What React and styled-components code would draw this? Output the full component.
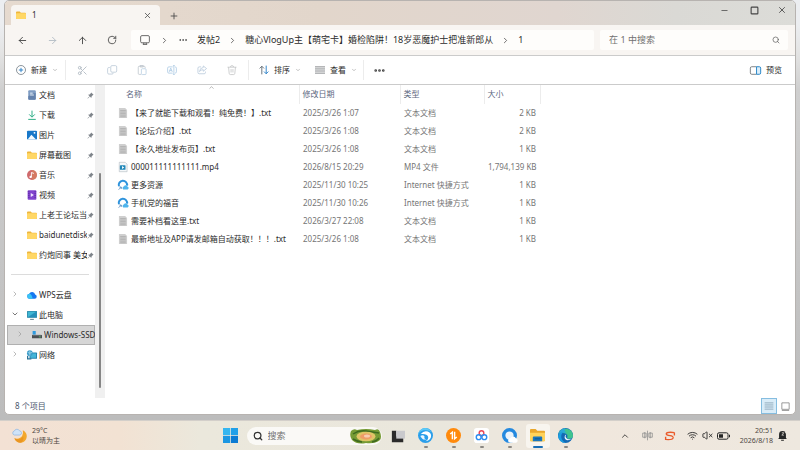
import React from 'react'
import styled, { createGlobalStyle } from 'styled-components'
import {
    ArrowLeft, ArrowRight, ArrowUp, RotateCw, ChevronRight, ChevronDown, ChevronUp,
    X, Plus, Minus, Square, Search, Wifi, VolumeX, Scissors, Ellipsis,
} from 'lucide-react'

const textColor = '#2b2b2b'
const mutedColor = '#757575'
const lineColor = '#cbcbcb'

const places = [
    { name: '文档', icon: 'doc' },
    { name: '下载', icon: 'download' },
    { name: '图片', icon: 'image' },
    { name: '屏幕截图', icon: 'folder' },
    { name: '音乐', icon: 'music' },
    { name: '视频', icon: 'video' },
    { name: '上老王论坛当', icon: 'folder' },
    { name: 'baidunetdisk', icon: 'folder' },
    { name: '约炮同事 美女', icon: 'folder' },
]

const drives = [
    { name: 'WPS云盘', icon: 'cloud' },
    { name: '此电脑', icon: 'pc', open: true },
    { name: 'Windows-SSD', icon: 'disk', nested: true, selected: true },
    { name: '网络', icon: 'network' },
]

const files = [
    { name: '【来了就能下载和观看！纯免费！】.txt', icon: 'txt', date: '2025/3/26 1:07', type: '文本文档', size: '2 KB' },
    { name: '【论坛介绍】.txt', icon: 'txt', date: '2025/3/26 1:08', type: '文本文档', size: '2 KB' },
    { name: '【永久地址发布页】.txt', icon: 'txt', date: '2025/3/26 1:08', type: '文本文档', size: '1 KB' },
    { name: '000011111111111.mp4', icon: 'mp4', date: '2026/8/15 20:29', type: 'MP4 文件', size: '1,794,139 KB' },
    { name: '更多资源', icon: 'url', date: '2025/11/30 10:25', type: 'Internet 快捷方式', size: '1 KB' },
    { name: '手机党的福音', icon: 'url', date: '2025/11/30 10:26', type: 'Internet 快捷方式', size: '1 KB' },
    { name: '需要补档看这里.txt', icon: 'txt', date: '2026/3/27 22:08', type: '文本文档', size: '1 KB' },
    { name: '最新地址及APP请发邮箱自动获取！！！.txt', icon: 'txt', date: '2025/3/26 1:08', type: '文本文档', size: '1 KB' },
]

const drawings = {
    folder: (
        <>
            <path d="M0 4q0-1.500 1.500-1.500h4.500l1.800 1.800h6.700q1.500 0 1.500 1.500v7q0 1.500-1.500 1.500h-13q-1.500 0-1.500-1.500z" fill="#eeb53c" />
            <path d="M0 6.200q0-1 1-1h14q1 0 1 1v6.600q0 1.500-1.500 1.500h-13q-1.500 0-1.500-1.500z" fill="#ffd766" />
        </>
    ),
    doc: (
        <>
            <rect x="2" y="0.500" width="12" height="15" rx="1.500" fill="#7f9cc3" />
            <path d="M2 10l12-6v10q0 1.500-1.500 1.500h-9q-1.500 0-1.500-1.500z" fill="#6482ad" />
            <path d="M5 5h4M5 8h6" stroke="#e9f1fa" strokeWidth="1.500" />
        </>
    ),
    download: (
        <path d="M8 1v10M3.500 7l4.500 4.500L12.500 7M2 15h12" stroke="#2fae86" strokeWidth="1.600" fill="none" />
    ),
    image: (
        <>
            <rect x="0" y="1" width="16" height="14" rx="1.500" fill="#1878c9" />
            <path d="M1 15l6-7.500 7.500 7.500z" fill="#f4fbff" />
            <circle cx="12" cy="4.500" r="1.500" fill="#fff" />
        </>
    ),
    music: (
        <>
            <circle cx="8" cy="8" r="8" fill="#cf6a6c" />
            <path d="M8 0a8 8 0 0 1 0 16z" fill="#d9855f" opacity="0.600" />
            <path d="M7 11V4l4 1.500" stroke="#fff" strokeWidth="1.500" fill="none" />
            <circle cx="5.800" cy="11" r="1.900" fill="#fff" />
        </>
    ),
    video: (
        <>
            <rect x="1" y="0.500" width="14" height="15" rx="1.500" fill="#8244cf" />
            <path d="M3 2v12M13 2v12" stroke="#4f2492" strokeWidth="1.500" strokeDasharray="1.500 1.500" />
            <path d="M6 4.800l5 3.200-5 3.200z" fill="#f1e6ff" />
        </>
    ),
    cloud: (
        <>
            <path d="M4 14a4 4 0 0 1-.5-7.900A5 5 0 0 1 13 7a3.600 3.600 0 0 1-.5 7z" fill="#1677f0" />
            <path d="M4 14a4 4 0 0 1-.5-7.900C6 6 8 9 9 14z" fill="#39c3f5" />
        </>
    ),
    pc: (
        <>
            <rect x="0" y="1.500" width="16" height="11" rx="1" fill="#2a7f9f" />
            <rect x="1" y="2.500" width="14" height="9" fill="#3fb6d3" />
            <path d="M1 11.500l14-9v9z" fill="#268fb9" />
            <path d="M5 15h6" stroke="#5b7b88" strokeWidth="1.500" />
        </>
    ),
    disk: (
        <>
            <path d="M1 1.500h5v6h-5z" fill="#2f9be0" />
            <path d="M0 8h16v5h-16z" fill="#4b5054" />
            <path d="M1 8h14" stroke="#9aa2a8" strokeWidth="1" />
            <path d="M11 11h3" stroke="#61d66d" strokeWidth="1.200" />
        </>
    ),
    network: (
        <>
            <rect x="4" y="4" width="12" height="10" rx="1" fill="#2482ad" />
            <rect x="5.500" y="5.500" width="9" height="7" fill="#45b5d8" />
            <circle cx="4.500" cy="5" r="4.500" fill="#3b9cc9" />
            <path d="M1 4q3 2 7 0M4.500 1v8" stroke="#bfe8f5" strokeWidth="1" fill="none" />
            <path d="M1 9v5h6" stroke="#2a7296" strokeWidth="2" fill="none" />
        </>
    ),
    txt: (
        <>
            <path d="M1.500 0h10l3 3v13h-13z" fill="#cfcfcf" />
            <path d="M3.500 4h9M3.500 6.500h9M3.500 9h9M3.500 11.500h9M3.500 14h9" stroke="#9f9f9f" strokeWidth="0.900" />
        </>
    ),
    mp4: (
        <>
            <path d="M2 .5h9.500l3 3v12h-12.500z" fill="#f5f8fa" stroke="#b4bcc2" />
            <rect x="3" y="5" width="9" height="7.500" rx="1" fill="#2187b8" />
            <path d="M6.500 6.500l3.500 2.300-3.500 2.300z" fill="#fff" />
        </>
    ),
    url: (
        <>
            <path d="M1.500 10A6.700 6.700 0 1 1 14.500 9" stroke="#2e93dc" strokeWidth="3.200" fill="none" />
            <path d="M8.500 15a2.500 2.500 0 0 1 1-4.600 3 3 0 0 1 5.500 0 2.400 2.400 0 0 1 .5 4.600z" fill="#4fb4ec" />
            <path d="M1 15.500l4-4M2 11.200h3.200v3.200" stroke="#3c78b4" strokeWidth="1.200" fill="none" />
        </>
    ),
    pin: (
        <path d="M9.500 1l5.500 5.500-2 .8-2.500 2.700-.7 3.500-3.300-3.300L2 15l-1-1 4.800-4.500L2.500 6.200l3.500-.7L8.700 3z" fill="#7f858b" />
    ),
    monitor: (
        <g stroke="#4a4a4a" strokeWidth="1.300" fill="none">
            <rect x="1" y="1" width="14" height="11.500" rx="2" />
            <path d="M4.500 15h7M6 12.500v2.500M10 12.500v2.500" />
        </g>
    ),
    add: (
        <>
            <circle cx="8" cy="8" r="7.200" stroke="#5a6670" strokeWidth="1.100" fill="none" />
            <path d="M8 4.500v7M4.500 8h7" stroke="#1d78c4" strokeWidth="1.400" />
        </>
    ),
    copy: (
        <g stroke="#b5c5d4" strokeWidth="1.200" fill="none">
            <rect x="6" y="1" width="9.500" height="10.500" rx="2" />
            <path d="M4.500 4h-1.500q-2 0-2 2v6.500q0 2 2 2h5q2 0 2-1.800" />
        </g>
    ),
    paste: (
        <g stroke="#b9c1c9" strokeWidth="1.200" fill="none">
            <path d="M6.500 15h-3q-1.500 0-1.500-1.500v-10q0-1.500 1.500-1.500h8q1.500 0 1.500 1.500v2" />
            <path d="M5 .8h5v2.400h-5z" />
            <rect x="7" y="6" width="7.500" height="9.300" rx="1.500" stroke="#b3cbe0" />
        </g>
    ),
    rename: (
        <g stroke="#a5c6e2" strokeWidth="1.200" fill="none">
            <path d="M9 3h-6q-2 0-2 2v6q0 2 2 2h6M13 3q2 0 2 2v6q0 2-2 2M11 1v14M9.500 1h3M9.500 15h3" />
            <path d="M3.500 11l2.500-6 2.500 6M4.300 9h3.400" />
        </g>
    ),
    share: (
        <g stroke="#b3c6d8" strokeWidth="1.200" fill="none">
            <path d="M6.500 3h-3q-2 0-2 2v7q0 2 2 2h8q2 0 2-2v-1.500" />
            <path d="M10 1.500l5.300 4.200-5.300 4.300v-2.500q-4-.2-6 3 .5-6 6-6.500z" />
        </g>
    ),
    trash: (
        <g stroke="#bfc0c2" strokeWidth="1.200" fill="none">
            <path d="M.8 3.500h14.400M5.500 3.300q0-2.300 2.500-2.300t2.500 2.300M2.500 3.500l1 10q.2 1.800 2 1.800h5q1.800 0 2-1.800l1-10M6.500 6.500v5.500M9.500 6.500v5.500" />
        </g>
    ),
    sort: (
        <>
            <path d="M4.500 15V2M1 5.500L4.500 2 8 5.500" stroke="#59636c" strokeWidth="1.400" fill="none" />
            <path d="M11.500 1v13M8 10.500l3.500 3.500 3.500-3.500" stroke="#1d78c4" strokeWidth="1.400" fill="none" />
        </>
    ),
    view: (
        <path d="M0 3h16M0 6.300h16M0 9.600h16M0 13h16" stroke="#6c7074" strokeWidth="1.300" />
    ),
    preview: (
        <>
            <path d="M9.500 2.500h-7q-2 0-2 2v7q0 2 2 2h7" stroke="#73777b" strokeWidth="1.300" fill="none" />
            <path d="M9.500 2.500h4q2 0 2 2v7q0 2-2 2h-4z" stroke="#2885c7" strokeWidth="1.400" fill="#dceefa" />
        </>
    ),
    details: (
        <path d="M1 3h14M1 6.300h14M1 9.600h14M1 13h14" stroke="#7e98ac" strokeWidth="1.200" />
    ),
    large: (
        <path d="M1.500 1.500h13v11.500h-13zM1.500 15h13" stroke="#777" strokeWidth="1.300" fill="none" />
    ),
    weather: (
        <>
            <path d="M11.500 2.500a6.800 6.800 0 1 1-9 8.500q6 1.500 8.500-3 1.200-2.600.5-5.500z" fill="#f3a72b" />
            <path d="M2.500 11q6 2.500 9.500-2 1 4-2.500 6.700-5 .3-7-4.700z" fill="#e58a1c" opacity="0.600" />
            <path d="M2.500 7.500a2.200 2.200 0 0 1 0-4.300A3 3 0 0 1 8 3a2.300 2.300 0 0 1 .5 4.500z" fill="#cfe3f8" stroke="#86b2e2" strokeWidth="0.700" />
        </>
    ),
    windows: (
        <>
            <path d="M0 0h7.600v7.600h-7.600z" fill="#35b6f0" />
            <path d="M8.400 0h7.600v7.600h-7.600z" fill="#21a0e8" />
            <path d="M0 8.400h7.600v7.600h-7.600z" fill="#1c97e2" />
            <path d="M8.400 8.400h7.600v7.600h-7.600z" fill="#0c7bd3" />
        </>
    ),
    taskview: (
        <>
            <path d="M1 2h5v6.500h8v6.500h-13z" fill="#2b2b2b" />
            <path d="M6 2h10v9h-10z" fill="#c9c9cc" />
        </>
    ),
    swirl: (
        <>
            <circle cx="8" cy="8" r="8" fill="#2a9eea" />
            <path d="M8 0a8 8 0 0 0-8 8q1-4.500 6-5.500 6-.8 8 2Q12 .5 8 0z" fill="#5bcaf8" />
            <path d="M3 6.500q3-4 7.500-2.700 4.300 1.800 3.300 6-1.300 3.900-5.800 4.200 3.500-2 2.800-4.800Q9.500 5.800 3 6.500z" fill="#fff" />
            <path d="M2.500 8.500q3-1.500 4.500.5-1 2.500 2 3-4 1.500-6.500-3.500z" fill="#eaf7ff" />
        </>
    ),
    transfer: (
        <>
            <circle cx="8" cy="8" r="8" fill="#ff8a0c" />
            <path d="M6.800 12V4.500L4.500 6.500M9.200 4v7.500L11.500 9.500" stroke="#fff" strokeWidth="1.500" fill="none" />
        </>
    ),
    baidu: (
        <>
            <rect x="0" y="0" width="16" height="16" rx="3" fill="#fff" />
            <g fill="none" strokeWidth="1.500">
                <circle cx="8" cy="5.500" r="2.500" stroke="#e8475a" />
                <circle cx="5" cy="9.800" r="2.600" stroke="#2c8df0" />
                <circle cx="11" cy="9.800" r="2.600" stroke="#2c8df0" />
            </g>
        </>
    ),
    qq: (
        <>
            <circle cx="8" cy="8" r="6.200" fill="#eaf3fb" stroke="#2489df" strokeWidth="3.600" />
            <path d="M9 15.800a2.500 2.500 0 0 1 0-5 3.300 3.300 0 0 1 5.800.2 2.500 2.500 0 0 1 .2 4.800z" fill="#fff" />
        </>
    ),
    explorer: (
        <>
            <path d="M0 2q0-1 1-1h5l1.800 2h7.200q1 0 1 1v9q0 1-1 1h-14q-1 0-1-1z" fill="#e9a72c" />
            <path d="M0 5h16v8q0 1-1 1h-14q-1 0-1-1z" fill="#ffd35a" />
            <path d="M3 14v-4q0-1 1-1h8q1 0 1 1v4z" fill="#1976bd" />
            <path d="M5 11.500h6" stroke="#0e5a97" strokeWidth="1.200" />
        </>
    ),
    edge: (
        <>
            <circle cx="8" cy="8" r="8" fill="#1469b4" />
            <path d="M.5 6A8 8 0 0 1 16 8q0 3.500-4 3.500-3 0-2-2.500.5-3-3-3.500-4-.2-6.500.5z" fill="#3fc48f" />
            <path d="M.5 6Q3 .5 8 0q-2 3 1 5.800Q5 3.500.5 6z" fill="#2aa9d8" />
            <path d="M0 8.500q1-4.500 6-4.300-3 2-2.500 6 .8 4 5 5.700Q1 16 0 8.500z" fill="#1b9de0" />
            <path d="M9 7q-2 2 .2 4 2 1.700 5.300.2-1.500 1.800-4 1.900-3.500-.5-3.500-3.500 0-2.300 2-2.600z" fill="#eef6fb" />
        </>
    ),
    ime: (
        <g stroke="#8b8b8b" strokeWidth="1.100" fill="none">
            <path d="M1 4.500h5v6h-5zM10 4.500h5v6h-5zM8 1v14M4 3v9M12 3v9" />
        </g>
    ),
    sogou: (
        <path d="M15 2.500Q2.500 1 2 4.500q0 2.500 6 3 5.500.8 5 3.500-1 3.500-12 2.500V9M15 2.500v4.500" fill="none" stroke="#ea5a2b" strokeWidth="2.200" />
    ),
    bell: (
        <>
            <path d="M3 11.500V6.500a5 5 0 0 1 10 0v5l1.500 1.500h-13zM6 14h4v1.500h-4z" fill="#262626" />
            <path d="M7 4h3l-3 3.500h3M12 1h3l-3 3h3" stroke="#efe9e0" strokeWidth="1" fill="none" />
        </>
    ),
}

function Glyph({ name, size = 10 }) {
    return (
        <Drawing width={size} height={size} viewBox="0 0 16 16" aria-hidden="true">{drawings[name]}</Drawing>
    )
}

function TreeItem({ item, pinned }) {
    return (
        <TreeRow $nested={item.nested} $pinned={pinned} $selected={item.selected}>
            <Expander>
                {!pinned && (item.open ? <ChevronDown size={8} color="#333" /> : <ChevronRight size={8} />)}
            </Expander>
            <Glyph name={item.icon} />
            <TreeLabel href="#">{item.name}</TreeLabel>
            {pinned && <Glyph name="pin" size={7} />}
        </TreeRow>
    )
}

function App() {
    return (
        <Desktop>
            <GlobalStyle />
            <Window>
                <TitleBar>
                    <Tab>
                        <Glyph name="folder" />
                        <TabName>1</TabName>
                        <IconButton $w={16} aria-label="关闭标签页"><X size={9} /></IconButton>
                    </Tab>
                    <IconButton $w={28} aria-label="新标签页"><Plus size={10} /></IconButton>
                    <Controls>
                        <IconButton $w={30} aria-label="最小化"><Minus size={9} /></IconButton>
                        <IconButton $w={30} aria-label="最大化"><Square size={9} strokeWidth={3} /></IconButton>
                        <IconButton $w={26} aria-label="关闭"><X size={10} /></IconButton>
                    </Controls>
                </TitleBar>

                <NavBar>
                    <NavButtons>
                        <IconButton $w={30} aria-label="后退"><ArrowLeft size={11} /></IconButton>
                        <IconButton $w={30} $faded aria-label="前进"><ArrowRight size={11} /></IconButton>
                        <IconButton $w={30} aria-label="向上"><ArrowUp size={11} /></IconButton>
                        <IconButton $w={30} aria-label="刷新"><RotateCw size={10} /></IconButton>
                    </NavButtons>
                    <AddressBar>
                        <IconButton $w={14} aria-label="此电脑"><Glyph name="monitor" /></IconButton>
                        <ChevronRight size={9} />
                        <IconButton $w={12} aria-label="更多"><Ellipsis size={10} /></IconButton>
                        <Crumb>发帖2</Crumb>
                        <ChevronRight size={9} />
                        <Crumb>糖心VlogUp主【萌宅卡】婚检陷阱！18岁恶魔护士把准新郎从</Crumb>
                        <ChevronRight size={9} />
                        <Crumb>1</Crumb>
                    </AddressBar>
                    <SearchBox>
                        <SearchInput aria-label="搜索" placeholder="在 1 中搜索" />
                        <Search size={8} />
                    </SearchBox>
                </NavBar>

                <ToolBar>
                    <ToolButton $w={55} $pad={6}><Glyph name="add" />新建<ChevronDown size={6} color="#888" /></ToolButton>
                    <ToolLine />
                    <ToolIcons>
                        <IconButton $w={30} $faded aria-label="剪切"><Scissors size={11} /></IconButton>
                        <IconButton $w={30} aria-label="复制"><Glyph name="copy" /></IconButton>
                        <IconButton $w={30} aria-label="粘贴"><Glyph name="paste" /></IconButton>
                        <IconButton $w={30} aria-label="重命名"><Glyph name="rename" /></IconButton>
                        <IconButton $w={30} aria-label="共享"><Glyph name="share" /></IconButton>
                        <IconButton $w={30} aria-label="删除"><Glyph name="trash" /></IconButton>
                    </ToolIcons>
                    <ToolLine />
                    <ToolButton $w={56} $pad={10}><Glyph name="sort" />排序<ChevronDown size={6} color="#888" /></ToolButton>
                    <ToolButton $w={58} $pad={10}><Glyph name="view" />查看<ChevronDown size={6} color="#888" /></ToolButton>
                    <ToolLine />
                    <IconButton $w={30} aria-label="查看更多"><Ellipsis size={13} strokeWidth={3} /></IconButton>
                    <PreviewButton><Glyph name="preview" size={11} />预览</PreviewButton>
                </ToolBar>

                <Content>
                    <Sidebar>
                        {places.map((item) => <TreeItem key={item.name} item={item} pinned />)}
                        <Divider />
                        {drives.map((item) => <TreeItem key={item.name} item={item} />)}
                    </Sidebar>
                    <ScrollTrack><ScrollThumb /></ScrollTrack>
                    <ListArea>
                        <FileTable>
                            <thead>
                                <tr>
                                    <HeadCell $w={181} $first>名称<SortMark><ChevronUp size={7} /></SortMark></HeadCell>
                                    <HeadCell $w={101}>修改日期</HeadCell>
                                    <HeadCell $w={84}>类型</HeadCell>
                                    <HeadCell $w={56}>大小</HeadCell>
                                </tr>
                            </thead>
                            <tbody>
                                {files.map((file) => (
                                    <tr key={file.name}>
                                        <NameCell>
                                            <FileName>
                                                <Glyph name={file.icon} />
                                                {file.name}
                                            </FileName>
                                        </NameCell>
                                        <Cell>{file.date}</Cell>
                                        <Cell>{file.type}</Cell>
                                        <Cell $right>{file.size}</Cell>
                                    </tr>
                                ))}
                            </tbody>
                        </FileTable>
                    </ListArea>
                </Content>

                <StatusBar>
                    <span>8 个项目</span>
                    <ViewButtons>
                        <ViewButton $active aria-label="详细信息"><Glyph name="details" /></ViewButton>
                        <ViewButton aria-label="大图标"><Glyph name="large" size={9} /></ViewButton>
                    </ViewButtons>
                </StatusBar>
            </Window>

            <TaskBar>
                <Weather>
                    <Glyph name="weather" size={15} />
                    <Stack>
                        <span>29°C</span>
                        <span>以晴为主</span>
                    </Stack>
                </Weather>
                <TaskCenter>
                    <IconButton $w={15} aria-label="开始"><Glyph name="windows" size={15} /></IconButton>
                    <TaskSearch>
                        <Search size={10} strokeWidth={3} />
                        <SearchInput aria-label="搜索 Windows" placeholder="搜索" />
                        <svg width="32" height="16" viewBox="0 0 32 16" aria-hidden="true">
                            <path d="M1 3q3-3 6-1 9-2 18 0 4-2 5 2 2 5 0 8-5 4-14 3-9 2-14-3-3-4-1-9z" fill="#769b35" />
                            <path d="M3 6q6-4 13-3t13 2M3 11q5 3 9 3M22 14q5-1 7-4" stroke="#3f6a20" strokeWidth="1.500" fill="none" />
                            <ellipse cx="16" cy="8.500" rx="9.500" ry="4.800" fill="#dfc467" />
                            <ellipse cx="16" cy="8.500" rx="6" ry="3" fill="#ee9c68" />
                            <ellipse cx="17" cy="8" rx="3" ry="1.500" fill="#f7ceb0" />
                        </svg>
                    </TaskSearch>
                    <IconButton $w={14} aria-label="任务视图"><Glyph name="taskview" size={14} /></IconButton>
                    <Apps>
                        <AppButton aria-label="浏览器"><Glyph name="swirl" size={15} /></AppButton>
                        <AppButton aria-label="传输"><Glyph name="transfer" size={15} /></AppButton>
                        <AppButton aria-label="网盘"><Glyph name="baidu" size={15} /></AppButton>
                        <AppButton aria-label="QQ浏览器"><Glyph name="qq" size={15} /></AppButton>
                        <AppButton $active aria-label="文件资源管理器"><Glyph name="explorer" size={15} /></AppButton>
                        <AppButton aria-label="Edge"><Glyph name="edge" size={15} /></AppButton>
                    </Apps>
                </TaskCenter>
                <Tray>
                    <ChevronUp size={10} />
                    <Glyph name="ime" size={11} />
                    <Glyph name="sogou" size={10} />
                    <TrayGroup>
                        <Wifi size={11} />
                        <VolumeX size={11} />
                        <svg width="13" height="8" viewBox="0 0 13 8" aria-hidden="true">
                            <rect x="0.500" y="0.800" width="10.500" height="6.400" rx="1.500" fill="none" stroke="#262626" />
                            <path d="M2 2.200h4v3.600h-4zM12 2.800h1v2.400h-1z" fill="#262626" />
                        </svg>
                    </TrayGroup>
                    <Clock>
                        <span>20:51</span>
                        <span>2026/8/18</span>
                    </Clock>
                    <Glyph name="bell" size={11} />
                </Tray>
            </TaskBar>
        </Desktop>
    )
}

export default App

const GlobalStyle = createGlobalStyle`
    body {
        margin: 0;
    }

    * {
        box-sizing: border-box;
    }

    body, button, input {
        font-family: 'Noto Sans', 'Noto Sans CJK SC', sans-serif;
        font-size: 8px;
        line-height: 10px;
        color: ${textColor};
    }

    button {
        border: 0;
        padding: 0;
        background: none;
    }

    svg {
        flex: none;
    }
`

const Drawing = styled.svg`
    display: block;
    overflow: visible;
`

const Desktop = styled.div`
    min-height: 100vh;
    display: flex;
    flex-direction: column;
    background: linear-gradient(#eceef1 24px, #e4e4e4 52px, #cfcfcf 90px, #bababa);
`

const Window = styled.div`
    flex: 1;
    display: flex;
    flex-direction: column;
    margin: 0 4px 5px;
    border: 1px solid #b7b3b0;
    border-radius: 5px;
    overflow: hidden;
    background: #fff;
`

const IconButton = styled.button`
    width: ${(props) => props.$w}px;
    height: 18px;
    flex: none;
    display: flex;
    align-items: center;
    justify-content: center;
    color: ${(props) => (props.$faded ? '#b3bcc5' : '#454545')};
`

const TitleBar = styled.div`
    display: flex;
    align-items: flex-end;
    height: 24px;
    padding-left: 6px;
    background: linear-gradient(90deg, #e6dacf, #e2d6cb 40%, #e0d6d0 70%, #dad9d5 85%, #dcdcd8);
`

const Tab = styled.div`
    display: flex;
    align-items: center;
    gap: 6px;
    width: 149px;
    height: 20px;
    padding: 0 5px;
    border-radius: 4px 4px 0 0;
    background: #f8f5f2;
`

const TabName = styled.span`
    flex: 1;
`

const Controls = styled.div`
    display: flex;
    align-self: flex-start;
    margin-left: auto;
`

const NavBar = styled.div`
    display: flex;
    align-items: center;
    gap: 6px;
    height: 31px;
    padding-right: 7px;
    background: #f8f5f2;
    border-bottom: 1px solid ${lineColor};
`

const NavButtons = styled.div`
    display: flex;
    width: 120px;
    padding-left: 2px;
`

const AddressBar = styled.div`
    flex: 1;
    display: flex;
    align-items: center;
    gap: 8px;
    min-width: 0;
    height: 20px;
    padding-left: 7px;
    border-radius: 2px;
    background: #fefdfb;
    color: #454545;
`

const Crumb = styled.button`
    font-size: 9px;
    line-height: 12px;
    white-space: nowrap;
`

const SearchBox = styled.label`
    display: flex;
    align-items: center;
    width: 24%;
    height: 20px;
    padding: 0 8px 0 9px;
    border-radius: 2px;
    background: #fefdfb;
    color: #555;
`

const SearchInput = styled.input`
    flex: 1;
    min-width: 0;
    border: 0;
    padding: 0;
    outline: none;
    background: none;
    font-size: 9px;
    line-height: 12px;

    &::placeholder {
        color: #707070;
    }
`

const ToolBar = styled.div`
    display: flex;
    align-items: center;
    height: 29px;
    padding: 0 13px 0 5px;
    border-bottom: 1px solid ${lineColor};
`

const ToolButton = styled.button`
    display: flex;
    align-items: center;
    gap: 5px;
    width: ${(props) => props.$w}px;
    height: 20px;
    padding-left: ${(props) => props.$pad}px;
    white-space: nowrap;
`

const PreviewButton = styled(ToolButton)`
    width: auto;
    margin-left: auto;
`

const ToolIcons = styled.div`
    display: flex;
    padding: 0 1px;
`

const ToolLine = styled.div`
    width: 1px;
    height: 20px;
    background: #ececec;
`

const Content = styled.div`
    flex: 1;
    display: flex;
`

const Sidebar = styled.nav`
    width: 90px;
    padding-left: 2px;
`

const TreeRow = styled.div`
    display: flex;
    align-items: center;
    height: 20px;
    padding-left: ${(props) => (props.$nested ? 9 : 4)}px;
    padding-right: ${(props) => (props.$pinned ? 1 : 0)}px;
    background: ${(props) => (props.$selected ? '#d6d6d6' : 'none')};
    box-shadow: ${(props) => (props.$selected ? 'inset 0 0 0 1px #b0b0b0' : 'none')};
`

const Expander = styled.span`
    width: 16px;
    flex: none;
    color: #999;
`

const TreeLabel = styled.a`
    flex: 1;
    min-width: 0;
    margin-left: 2px;
    overflow: hidden;
    white-space: nowrap;
    text-decoration: none;
    color: ${textColor};
`

const Divider = styled.hr`
    margin: 9px 6px 10px 4px;
    border: 0;
    border-top: 1px solid #dcdcdc;
`

const ScrollTrack = styled.div`
    width: 10px;
    padding: 88px 4px 10px;
    display: flex;
    background: #f0f0f0;
`

const ScrollThumb = styled.div`
    width: 2px;
    border-radius: 1px;
    background: #868686;
`

const ListArea = styled.main`
    flex: 1;
    padding-left: 13px;
`

const FileTable = styled.table`
    table-layout: fixed;
    width: 422px;
    border-collapse: collapse;
`

const HeadCell = styled.th`
    position: relative;
    width: ${(props) => props.$w}px;
    height: 19px;
    padding: 0 0 1px ${(props) => (props.$first ? 8 : 3)}px;
    border-right: 1px solid #ececec;
    text-align: left;
    font-weight: normal;
    color: #5c6780;
`

const SortMark = styled.span`
    position: absolute;
    top: -2px;
    left: 50%;
    color: #888;
`

const Cell = styled.td`
    height: 18px;
    padding: 0 4px;
    text-align: ${(props) => (props.$right ? 'right' : 'left')};
    white-space: nowrap;
    color: ${mutedColor};
`

const NameCell = styled(Cell)`
    padding: 0;
    color: ${textColor};
`

const FileName = styled.div`
    display: flex;
    align-items: center;
    gap: 3px;
`

const StatusBar = styled.div`
    display: flex;
    align-items: center;
    justify-content: space-between;
    height: 16px;
    padding: 0 2px 0 10px;
    color: #4b566c;
`

const ViewButtons = styled.div`
    display: flex;
`

const ViewButton = styled.button`
    display: flex;
    align-items: center;
    justify-content: center;
    width: 16px;
    height: 16px;
    border: 1px solid ${(props) => (props.$active ? '#85bde0' : 'transparent')};
    background: ${(props) => (props.$active ? '#d9ecf8' : 'none')};
`

const TaskBar = styled.footer`
    display: grid;
    grid-template-columns: 1fr auto 1fr;
    align-items: center;
    height: 30px;
    padding: 0 12px;
    border-top: 1px solid #d3cfca;
    background: linear-gradient(90deg, #f3e1d4, #f2e2d3 15%, #ebe8dc 25%, #eae7dd 55%, #f0e7dd 75%, #eee8df);
`

const Weather = styled.div`
    display: flex;
    align-items: center;
    gap: 5px;
`

const Stack = styled.div`
    display: flex;
    flex-direction: column;
    font-size: 7px;
    color: #4d4742;
`

const TaskCenter = styled.div`
    display: flex;
    align-items: center;
    gap: 9px;
`

const TaskSearch = styled.label`
    display: flex;
    align-items: center;
    gap: 5px;
    width: 135px;
    height: 18px;
    padding-left: 6px;
    border-radius: 9px;
    background: #faf9f6;
    color: #333;
`

const Apps = styled.div`
    display: flex;
    gap: 4px;
`

const AppButton = styled.button`
    display: flex;
    flex-direction: column;
    align-items: center;
    justify-content: space-between;
    width: 24px;
    height: 24px;
    padding-top: 4px;
    border-radius: 3px;
    background: ${(props) => (props.$active ? '#f8f5ef' : 'none')};

    &:after {
        content: '';
        width: ${(props) => (props.$active ? 10 : 4)}px;
        height: 2px;
        border-radius: 1px;
        background: ${(props) => (props.$active ? '#1a6fb5' : '#8b8883')};
    }
`

const Tray = styled.div`
    display: flex;
    align-items: center;
    justify-content: flex-end;
    gap: 12px;
`

const TrayGroup = styled.div`
    display: flex;
    align-items: center;
    gap: 4px;
`

const Clock = styled(Stack)`
    align-items: flex-end;
    margin: 0 -8px 0 -2px;
`
